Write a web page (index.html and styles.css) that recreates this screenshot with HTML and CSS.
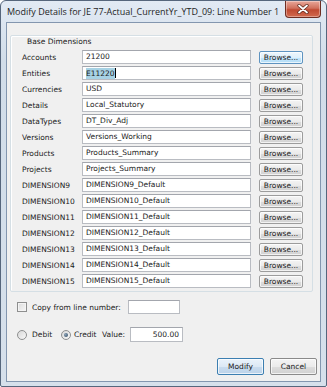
FILE: index.html
```html
<!DOCTYPE html>
<html lang="en">
<head>
  <meta charset="UTF-8" />
  <title>Modify Details</title>
  <link rel="stylesheet" href="styles.css">
</head>
<body>
  <div class="window">
    <div class="titlebar">
      <div class="title">Modify Details for JE 77-Actual_CurrentYr_YTD_09: Line Number 1</div>
      <div class="close">
        <svg width="12" height="10" viewBox="0 0 12 10">
          <path d="M2 1.5 L10 8.5 M10 1.5 L2 8.5" stroke="#5a2418" stroke-width="3.2" stroke-linecap="round"/>
          <path d="M2 1.5 L10 8.5 M10 1.5 L2 8.5" stroke="#fff" stroke-width="1.8" stroke-linecap="round"/>
        </svg>
      </div>
    </div>

    <div class="client">
      <!-- Base dimensions -->
      <div class="group">
        <div class="group-title">Base Dimensions</div>
        <div class="rows">
          <div class="row"><span class="label">Accounts</span><div class="field">21200</div><button class="btn browse hot">Browse...</button></div>
          <div class="row"><span class="label">Entities</span><div class="field"><span class="sel">E11220</span><span class="caret"></span></div><button class="btn browse">Browse...</button></div>
          <div class="row"><span class="label">Currencies</span><div class="field">USD</div><button class="btn browse">Browse...</button></div>
          <div class="row"><span class="label">Details</span><div class="field">Local_Statutory</div><button class="btn browse">Browse...</button></div>
          <div class="row"><span class="label">DataTypes</span><div class="field">DT_Div_Adj</div><button class="btn browse">Browse...</button></div>
          <div class="row"><span class="label">Versions</span><div class="field">Versions_Working</div><button class="btn browse">Browse...</button></div>
          <div class="row"><span class="label">Products</span><div class="field">Products_Summary</div><button class="btn browse">Browse...</button></div>
          <div class="row"><span class="label">Projects</span><div class="field">Projects_Summary</div><button class="btn browse">Browse...</button></div>
          <div class="row"><span class="label">DIMENSION9</span><div class="field">DIMENSION9_Default</div><button class="btn browse">Browse...</button></div>
          <div class="row"><span class="label">DIMENSION10</span><div class="field">DIMENSION10_Default</div><button class="btn browse">Browse...</button></div>
          <div class="row"><span class="label">DIMENSION11</span><div class="field">DIMENSION11_Default</div><button class="btn browse">Browse...</button></div>
          <div class="row"><span class="label">DIMENSION12</span><div class="field">DIMENSION12_Default</div><button class="btn browse">Browse...</button></div>
          <div class="row"><span class="label">DIMENSION13</span><div class="field">DIMENSION13_Default</div><button class="btn browse">Browse...</button></div>
          <div class="row"><span class="label">DIMENSION14</span><div class="field">DIMENSION14_Default</div><button class="btn browse">Browse...</button></div>
          <div class="row"><span class="label">DIMENSION15</span><div class="field">DIMENSION15_Default</div><button class="btn browse">Browse...</button></div>
        </div>
      </div>

      <!-- Copy from line -->
      <div class="copy-row">
        <span class="check"></span>
        <span class="copy-label">Copy from line number:</span>
        <div class="field small"></div>
      </div>

      <!-- Debit / credit -->
      <div class="sign-row">
        <div class="option debit"><span class="radio"></span>Debit</div>
        <div class="option credit"><span class="radio checked"></span>Credit</div>
        <span class="value-label">Value:</span>
        <div class="field small value">500.00</div>
      </div>

      <div class="actions">
        <button class="btn action default">Modify</button>
        <button class="btn action">Cancel</button>
      </div>
    </div>
  </div>
</body>
</html>
```

FILE: styles.css
```css
* {
  box-sizing: border-box;
}

body {
  margin: 0;
  font-family: "DejaVu Sans", sans-serif;
  font-size: 7.5px;
  color: #1b1b1b;
  background: #fff;
}

.window {
  width: 327px;
  height: 387px;
  border: 1px solid #56667c;
  border-radius: 6px 6px 2px 2px;
  background: linear-gradient(#e2eaf4, #d2dde9 60px, #d6e0eb);
  padding: 0 5px 4px;
  display: flex;
  flex-direction: column;
}

.titlebar {
  height: 21px;
  display: flex;
  align-items: flex-start;
}

.title {
  flex: 1;
  font-family: "Open Sans", sans-serif;
  font-size: 9px;
  line-height: 22px;
  padding-left: 1px;
  color: #1e1e1e;
  white-space: nowrap;
  overflow: hidden;
}

.close {
  width: 36px;
  height: 17px;
  border: 1px solid #6e2d22;
  border-top: none;
  border-radius: 0 0 4px 4px;
  background: linear-gradient(#e9a89a, #d0705c 45%, #c04a32 55%, #d26a4e);
  box-shadow: inset 0 0 0 1px rgba(255, 255, 255, 0.35);
  display: flex;
  align-items: center;
  justify-content: center;
}

.client {
  flex: 1;
  background: #f0f0f0;
  border: 1px solid #8396af;
  display: flex;
  flex-direction: column;
}

.group {
  margin: 12px 7px 0 3px;
  border: 1px solid #d5dfe5;
  border-radius: 2px;
  box-shadow: inset 1px 1px 0 #fff;
  padding: 0 8px 3px 11px;
}

.group-title {
  line-height: 12px;
  padding-left: 5px;
  margin-bottom: 2px;
}

.rows {
  display: flex;
  flex-direction: column;
  gap: 2px;
}

.row {
  display: flex;
  align-items: center;
  height: 14px;
}

.label {
  width: 60px;
}

.field {
  width: 169px;
  height: 14px;
  border: 1px solid #b9bcc2;
  border-top-color: #a3a6ad;
  background: #fff;
  padding: 0 3px;
  line-height: 12px;
  white-space: nowrap;
  display: flex;
  align-items: center;
}

.sel {
  background: #a7d2e4;
  line-height: 11px;
}

.caret {
  width: 1px;
  height: 10px;
  background: #000;
}

.btn {
  font-family: "DejaVu Sans", sans-serif;
  font-size: 7.5px;
  color: #1b1b1b;
  padding: 0;
  border: 1px solid #9c9c9c;
  border-radius: 2px;
  background: linear-gradient(#f4f4f4, #ebebeb 50%, #dddddd 51%, #d1d1d1);
  box-shadow: inset 0 0 0 1px rgba(255, 255, 255, 0.7);
}

.browse {
  margin-left: 8px;
  width: 44px;
  height: 13px;
  line-height: 11px;
}

.browse.hot {
  border-color: #5e93c0;
  background: linear-gradient(#eef7fd, #def0fc 50%, #c3e6fb 51%, #b3dcf6);
}

.copy-row {
  display: flex;
  align-items: center;
  height: 14px;
  margin-top: 8px;
  padding-left: 10px;
}

.check {
  width: 10px;
  height: 10px;
  border: 1px solid #8e8f8f;
  background: linear-gradient(135deg, #dcdcdc, #f6f6f6);
  box-shadow: inset 0 0 0 1px #f4f4f4;
  margin-right: 5px;
}

.copy-label {
  width: 90px;
  margin-right: 6px;
}

.field.small {
  width: 52px;
}

.sign-row {
  display: flex;
  align-items: center;
  height: 15px;
  margin-top: 13px;
  padding-left: 10px;
}

.sign-row .field {
  height: 15px;
}

.option {
  display: flex;
  align-items: center;
  gap: 5px;
}

.debit {
  width: 44px;
}

.credit {
  width: 41px;
  gap: 3px;
}

.radio {
  width: 10px;
  height: 10px;
  border-radius: 50%;
  border: 1px solid #8e8f8f;
  background: linear-gradient(135deg, #d8d8d8, #f8f8f8);
  display: flex;
  align-items: center;
  justify-content: center;
}

.radio.checked::after {
  content: "";
  width: 4px;
  height: 4px;
  border-radius: 50%;
  background: radial-gradient(circle at 35% 35%, #8aa2b8, #2f475e);
}

.value-label {
  width: 28px;
}

.field.value {
  width: 53px;
  justify-content: flex-end;
}

.actions {
  display: flex;
  justify-content: flex-end;
  gap: 6px;
  margin-top: 16px;
  padding-right: 3px;
}

.action {
  width: 47px;
  height: 17px;
  border-color: #8a8a8a;
}

.action.default {
  border-color: #3c7fb1;
  background: linear-gradient(#eaf3fb, #dce9f5 50%, #c9dcee 51%, #bcd3ea);
}
```
